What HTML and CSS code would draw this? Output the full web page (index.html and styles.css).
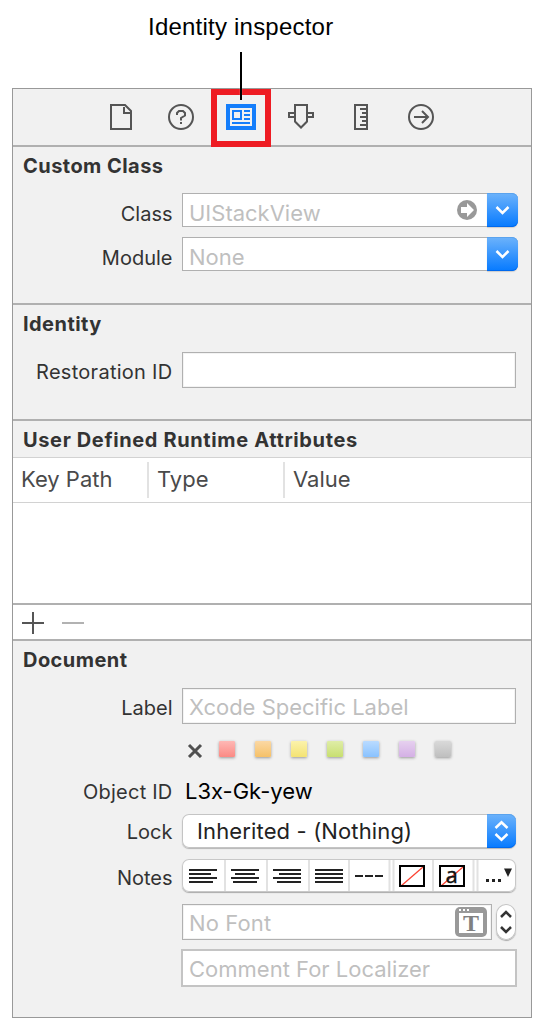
FILE: index.html
```html
<!DOCTYPE html>
<html lang="en">
<head>
<meta charset="utf-8">
<title>Identity inspector</title>
<link rel="stylesheet" href="styles.css">
</head>
<body>
<div class="caption"><span>Identity inspector</span></div>
<main class="panel">
  <nav class="toolbar">
    <div class="tool"><svg width="60" height="56" fill="none" stroke="#555" stroke-width="2"><path d="M20 16H34L40 22V40H20Z"/><path d="M33 18V24H39"/></svg></div>
    <div class="tool"><svg width="60" height="56" fill="none" stroke="#555" stroke-width="2"><circle cx="30" cy="28" r="12"/><path d="M26 26V24L28 22H32L34 24V26.500L30 29V31.500M30 33V35"/></svg></div>
    <div class="tool selected"><svg width="48" height="46"><path fill="#157efb" d="M9 9H39V35H9Z"/><path fill="#f1f1f1" d="M13 13H35V31H13Z"/><path fill="none" stroke="#157efb" stroke-width="2" d="M16 16H24V24H16ZM27 16H33M27 20H33M27 24H33M15 28H33"/></svg></div>
    <div class="tool"><svg width="60" height="56" fill="none" stroke="#555" stroke-width="2"><path d="M24 16H36V32.500L30 38.500L24 32.500ZM24 24H18V28H24M36 24H42V28H36"/></svg></div>
    <div class="tool"><svg width="60" height="56" fill="none" stroke="#555" stroke-width="2"><path d="M24 16H36V40H24ZM29 20H36M31 24H36M29 28H36M31 32H36M29 36H36"/></svg></div>
    <div class="tool"><svg width="60" height="56" fill="none" stroke="#555" stroke-width="2"><circle cx="30" cy="28" r="12"/><path d="M23 28H36.500M31 22L37 28L31 34"/></svg></div>
    <i class="leader"></i>
  </nav>

  <section class="section custom-class">
    <h2>Custom Class</h2>
    <div class="row"><label>Class</label>
      <div class="combo"><span class="hint">UIStackView</span>
        <svg class="go" width="20" height="20"><circle cx="10" cy="10" r="10" fill="#999"/><path fill="#fff" d="M4 7H10V3L17 10L10 17V13H4Z"/></svg>
        <div class="drop"><svg width="31" height="34" fill="none" stroke="#fff" stroke-width="2.500"><path d="M9.500 14L15.500 20L21.500 14"/></svg></div>
      </div>
    </div>
    <div class="row"><label>Module</label>
      <div class="combo"><span class="hint">None</span>
        <div class="drop"><svg width="31" height="34" fill="none" stroke="#fff" stroke-width="2.500"><path d="M9.500 14L15.500 20L21.500 14"/></svg></div>
      </div>
    </div>
  </section>

  <section class="section identity">
    <h2>Identity</h2>
    <div class="row"><label class="restoration">Restoration ID</label><div class="field"></div></div>
  </section>

  <section class="section attributes">
    <h2>User Defined Runtime Attributes</h2>
    <div class="thead"><span class="key">Key Path</span><span class="type">Type</span><span class="value">Value</span></div>
    <div class="tbody"></div>
    <div class="tfoot"><svg width="80" height="34" fill="none" stroke-width="2"><path stroke="#555" d="M9 18H31M20 7V29"/><path stroke="#b2b2b2" d="M49 18H71"/></svg></div>
  </section>

  <section class="section document">
    <h2>Document</h2>
    <div class="row label-row"><label>Label</label><div class="field"><span class="hint">Xcode Specific Label</span></div></div>
    <div class="swatches">
      <svg width="16" height="16" fill="none" stroke="#505050" stroke-width="3"><path d="M2 3L14 15M14 3L2 15"/></svg>
      <i class="sw red"></i><i class="sw orange"></i><i class="sw yellow"></i><i class="sw green"></i><i class="sw blue"></i><i class="sw purple"></i><i class="sw gray"></i>
    </div>
    <div class="row id-row"><label>Object ID</label><span class="object-id">L3x-Gk-yew</span></div>
    <div class="row lock-row"><label>Lock</label>
      <div class="popup"><span class="inherited">Inherited - (Nothing)</span>
        <div class="updown"><svg width="29" height="34" fill="none" stroke="#fff" stroke-width="2.500"><path d="M8.500 14L14.500 8.300L20.500 14M8.500 20L14.500 25.700L20.500 20"/></svg></div>
      </div>
    </div>
    <div class="row notes-row"><label>Notes</label>
      <div class="segments">
        <svg width="334" height="33" fill="none">
          <path stroke="#e2e2e2" stroke-width="2" d="M43 1V32M85 1V32M127 1V32M167 1V32M207.500 1V32M211.500 1V32M251 1V32M291.500 1V32M295.500 1V32"/>
          <path stroke="#222" stroke-width="2" d="M7 11H35M7 15H29M7 19H35M7 23H31M49 11H77M53 15H73M49 19H77M51 23H75M91 11H119M97 15H119M91 19H119M95 23H119M133 11H161M133 15H161M133 19H161M133 23H161M173 17H181M183 17H191M193 17H201"/>
          <path stroke="#fb4332" stroke-width="1.300" d="M219 27L241 8"/>
          <path stroke="#fb4332" stroke-width="1.300" d="M259 27L281 8"/>
          <path stroke="#000" stroke-width="2" d="M218 7H242V27H218ZM258 7H282V27H258Z"/>
          <text x="263.500" y="24" class="a-glyph">a</text>
          <path fill="#222" d="M304 20h3v3h-3zM310 20h3v3h-3zM316 20h3v3h-3zM322 9.500H330L326 18Z"/>
        </svg>
      </div>
    </div>
    <div class="font-row">
      <div class="field"><span class="hint">No Font</span>
        <svg class="font-icon" width="32" height="30"><rect width="32" height="30" rx="5" fill="#999"/><path fill="#fff" d="M4 6H28V26H4ZM4 2h2v2h-2zM8 2h2v2h-2zM12 2h2v2h-2z"/><text x="16" y="24" class="t-glyph">T</text></svg>
      </div>
      <div class="stepper"><svg width="20" height="36" fill="none" stroke="#333" stroke-width="2.500"><path d="M5 13L10 8L15 13M5 23L10 28L15 23"/></svg></div>
    </div>
    <div class="comment"><span class="hint">Comment For Localizer</span></div>
  </section>
</main>
</body>
</html>
```
FILE: styles.css
```css
* { box-sizing: border-box; }
body { margin: 0; width: 544px; height: 1030px; overflow: hidden; background: #fff; color: #333; font-family: Inter, sans-serif; }
svg { display: block; flex: none; }
.caption { height: 88px; padding: 13px 0 0 148px; color: #000; font: 24px/28px "Liberation Sans", Arial, sans-serif; letter-spacing: .22px; white-space: nowrap; }
.panel { width: 520px; height: 930px; margin-left: 12px; background: #f1f1f1; border: 1px solid #999; }
.toolbar { position: relative; display: flex; height: 56px; padding-left: 78px; }
.tool { width: 60px; height: 56px; }
.tool.selected { position: relative; z-index: 1; height: 58px; border: 6px solid #ee1c23; }
.leader { position: absolute; z-index: 2; left: 227px; top: -37px; width: 2px; height: 48px; background: #000; box-shadow: 0 0 1px #fff; }
.section { border-top: 2px solid #b0b0b0; }
h2 { margin: 0; padding: 7px 0 0 10px; font-size: 20px; line-height: 24px; font-weight: 700; letter-spacing: .45px; white-space: nowrap; }
.row { display: grid; grid-template-columns: 159.500px 1fr; column-gap: 9.500px; align-items: center; }
label { justify-self: end; font-size: 20px; line-height: 24px; white-space: nowrap; }
.hint { color: #bfbfbf; font-size: 22px; line-height: 26px; white-space: nowrap; }
.custom-class { height: 158px; }
.custom-class h2 { margin-bottom: 15px; }
.custom-class .row { height: 34px; margin-bottom: 10px; }
.custom-class label { padding-top: 7px; }
.combo .hint { padding-top: 6px; }
.combo { display: flex; align-items: center; width: 336px; height: 34px; padding-left: 6px; background: #fff; border: 1px solid #b0b0b0; border-right: 0; border-radius: 0 7px 7px 0; }
.go { margin: 0 10px 0 auto; }
.drop { width: 31px; height: 34px; margin: -1px 0; border-radius: 0 6px 6px 0; background: linear-gradient(#6db3fb, #067aff); box-shadow: inset 0 -1px #0069ed, inset 0 1px #5aa3ee, 0 1px 1px #ccc; }
.hint + .drop { margin-left: auto; }
.field { display: flex; align-items: center; width: 334px; height: 36px; padding-left: 6px; background: #fff; border: 1px solid #b0b0b0; box-shadow: inset 0 0 0 1px #f3f3f3; }
.identity { height: 116px; }
.identity h2, .document h2 { margin-bottom: 16px; }
.identity label, .label-row label { padding-top: 3px; }
.restoration { letter-spacing: .28px; }
.attributes { height: 220px; }
.attributes h2 { height: 36px; letter-spacing: .63px; }
.thead { display: flex; align-items: center; height: 46px; background: #fff; border: solid #d2d2d2; border-width: 1px 0; font-size: 22px; color: #4a4a4a; }
.thead span { height: 36px; line-height: 34px; padding-left: 8px; white-space: nowrap; }
.thead .key, .thead .type { width: 136px; border-right: 2px solid #e2e2e2; }
.tbody { height: 100px; background: #fff; }
.tfoot { height: 36px; background: #fff; border-top: 2px solid #b0b0b0; }
.document { height: 378px; }
.label-row .hint { padding-top: 2px; }
.swatches { display: flex; height: 48px; padding: 17px 0 0 174px; }
.swatches > svg { margin: 1px 16px 0 0; }
.sw { width: 16px; height: 16px; margin-right: 20px; box-shadow: 0 1px 3px #999; border-radius: 1px; }
.sw.red { background: linear-gradient(#feb8b5, #fb8a84); }
.sw.orange { background: linear-gradient(#fbd8a4, #f6c168); }
.sw.yellow { background: linear-gradient(#fbf2ac, #f4e373); }
.sw.green { background: linear-gradient(#dfeda7, #c8df70); }
.sw.blue { background: linear-gradient(#badbff, #89c2ff); }
.sw.purple { background: linear-gradient(#e6d0ef, #d4b0e5); }
.sw.gray { background: linear-gradient(#d9d9d9, #bfbfbf); }
.id-row { height: 38px; margin-bottom: 4px; }
.id-row label { padding-top: 2px; letter-spacing: .22px; }
.object-id { padding-left: 3px; color: #000; font-size: 22px; line-height: 26px; }
.lock-row { height: 34px; margin-bottom: 11px; }
.lock-row label { padding-top: 2px; }
.popup { display: flex; align-items: center; justify-content: space-between; width: 334px; height: 34px; padding-left: 15px; background: #fff; border-radius: 7px; box-shadow: inset 0 0 0 1px #c4c4c4, 0 1px 1px #b5b5b5; color: #222; font-size: 22px; line-height: 26px; letter-spacing: .14px; white-space: nowrap; }
.updown { width: 29px; height: 34px; border-radius: 0 7px 7px 0; background: linear-gradient(#6db3fb, #067aff); box-shadow: inset 0 -1px #0069ed, inset 0 1px #5aa3ee; }
.notes-row { height: 33px; margin-bottom: 12px; }
.notes-row label { padding-top: 4px; }
.segments { width: 334px; height: 33px; background: #fff; border-radius: 7px; box-shadow: inset 0 0 0 1px #c8c8c8, 0 1px 1px #aaa; }
.a-glyph { font: 400 22px "Noto Sans", sans-serif; fill: #111; stroke: #111; stroke-width: .3px; }
.font-row { display: flex; gap: 4px; height: 36px; margin: 0 0 9px 169px; }
.font-row .field { width: 310px; }
.font-row .hint { padding-top: 2px; letter-spacing: .12px; }
.font-icon { margin: 0 4px 0 auto; }
.t-glyph { font: bold 24px "Liberation Serif", serif; fill: #808080; text-anchor: middle; }
.stepper { width: 20px; height: 36px; border-radius: 10px; background: #fff; box-shadow: inset 0 0 0 1px #c4c4c4, 0 1px 1px #aaa; }
.comment { display: flex; align-items: center; width: 336px; height: 38px; margin-left: 168px; padding: 2px 0 0 6px; background: #fff; border: 2px solid #c4c4c4; }
```
